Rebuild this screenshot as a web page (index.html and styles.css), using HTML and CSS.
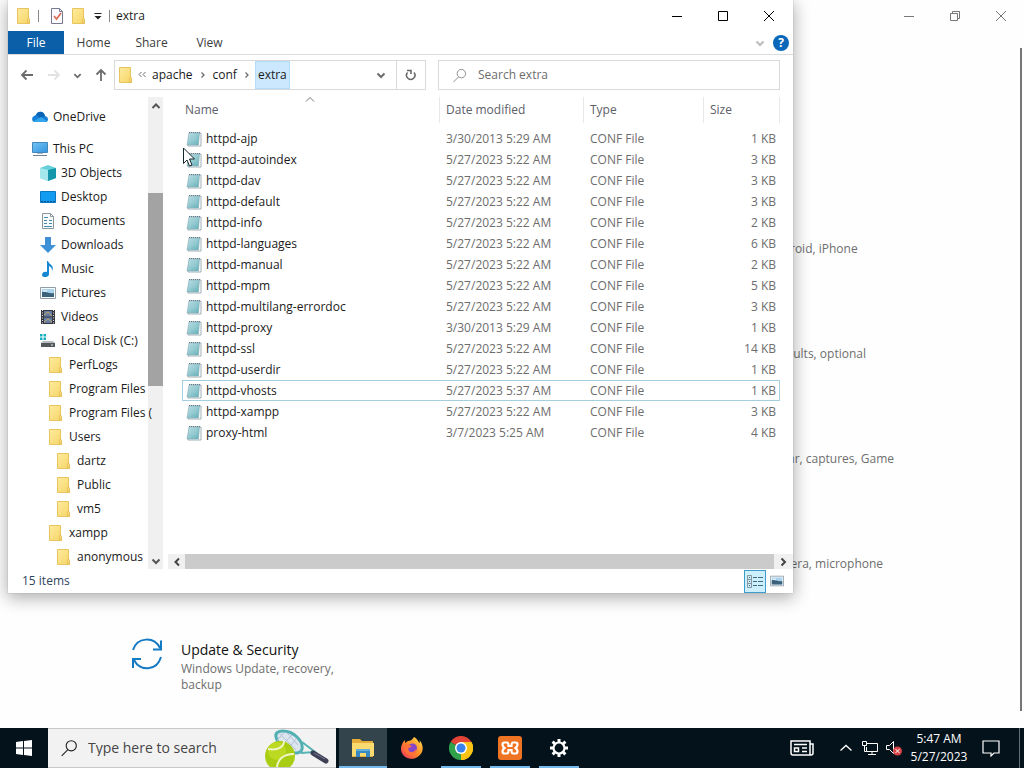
FILE: index.html
```html
<!DOCTYPE html>
<html lang="en">
<head>
<meta charset="utf-8">
<title>extra</title>
<link rel="stylesheet" href="styles.css">
</head>
<body>
<svg class="defs" aria-hidden="true">
  <defs>
    <linearGradient id="fold" x2="1" y2="1"><stop offset="0" stop-color="#ffeb9e"/><stop offset="1" stop-color="#f6d567"/></linearGradient>
    <linearGradient id="note" x2="1" y2="1"><stop offset="0" stop-color="#c3e1e8"/><stop offset="1" stop-color="#62b1b7"/></linearGradient>
    <linearGradient id="blue" x2="1" y2="1"><stop offset="0" stop-color="#72c3f5"/><stop offset="1" stop-color="#3494de"/></linearGradient>
    <linearGradient id="fox" x1="1" x2="0" y2="1"><stop offset="0" stop-color="#ffe34c"/><stop offset=".5" stop-color="#ff8a27"/><stop offset="1" stop-color="#f52c63"/></linearGradient>
    <symbol id="i-folder" viewBox="0 0 16 16"><path d="M1.500.5h11v11l1 .5v3.500h-12z" fill="url(#fold)" stroke="#e8c45f"/><path d="M11.500 15V11.500l1-2 1 2V15z" fill="#f7d978" stroke="#dfb84f" stroke-width=".7"/></symbol>
    <symbol id="i-note" viewBox="0 0 16 16"><path d="M4 2h11v13H2z" fill="#fff" stroke="#8b9da3" stroke-width=".8"/><path d="M3 2h10.500l-1 12H1z" fill="url(#note)" stroke="#86adb9" stroke-width=".6"/><path d="M3 1.500h11" stroke="#5f7a84" stroke-dasharray="1 1"/><path d="M4 5h7M4 7h7M3.500 9h7" stroke="#a3d1d8" stroke-width=".6"/></symbol>
    <symbol id="i-down" viewBox="0 0 10 10"><path d="M1.500 3.500 5 7l3.500-3.500" fill="none" stroke="currentColor" stroke-width="2"/></symbol>
    <symbol id="i-up" viewBox="0 0 10 10"><path d="M1.500 7 5 3.500 8.500 7" fill="none" stroke="currentColor" stroke-width="2"/></symbol>
    <symbol id="i-right" viewBox="0 0 10 10"><path d="M3.500 1.500 7 5 3.500 8.500" fill="none" stroke="currentColor" stroke-width="2"/></symbol>
    <symbol id="i-left" viewBox="0 0 10 10"><path d="M7 1.500 3.500 5 7 8.500" fill="none" stroke="currentColor" stroke-width="2"/></symbol>
    <symbol id="i-crumb" viewBox="0 0 10 10"><path d="M3.500 2.500 6 5 3.500 7.500" fill="none" stroke="currentColor" stroke-width="1.300"/></symbol>
    <symbol id="i-close" viewBox="0 0 12 12"><path d="m1 1 10 10M11 1 1 11" fill="none" stroke="currentColor"/></symbol>
    <symbol id="i-min" viewBox="0 0 12 12"><path d="M1 6.500h10" stroke="currentColor"/></symbol>
    <symbol id="i-search" viewBox="0 0 16 16"><circle cx="10" cy="6" r="4.500" fill="none" stroke="currentColor"/><path d="M7 9.500 1.500 15" stroke="currentColor"/></symbol>
    <symbol id="i-picture" viewBox="0 0 16 16"><path d="M.5 2.500h15v11H.5z" fill="#f8fbfd" stroke="#929da8"/><path d="M2 4h12v8H2z" fill="#a9d3ed"/><path d="M2 7c4-1 7 2 12 1v4H2z" fill="#3b617b"/><path d="M3 6h4" stroke="#fff"/></symbol>
  </defs>
</svg>

<div class="desktop">
  <main class="settings">
    <header class="settings-bar">
      <button class="caption" aria-label="Minimize Settings"><svg class="s12"><use href="#i-min"/></svg></button>
      <button class="caption" aria-label="Restore Settings"><svg class="s12" viewBox="0 0 12 12" fill="none" stroke="currentColor"><path d="M1.500 3.500h7v7h-7zM3.500 3.500v-2h7v7h-2"/></svg></button>
      <button class="caption" aria-label="Close Settings"><svg class="s12"><use href="#i-close"/></svg></button>
    </header>
    <div class="settings-body">
      <div class="categories">
        <a href="#" class="category third"><span class="category-text">Link your Android, iPhone</span></a>
        <a href="#" class="category third"><span class="category-text">Uninstall, defaults, optional</span></a>
        <a href="#" class="category third"><span class="category-text">Xbox Game Bar, captures, Game</span></a>
        <a href="#" class="category third"><span class="category-text">Location, camera, microphone</span></a>
        <a href="#" class="category">
          <svg class="category-icon" viewBox="0 0 32 32" fill="none" stroke="#147ac4" stroke-width="2"><path d="M2 12C6-1 23-2 29 10M30 2.500v9h-8M30 19C26 33 9 34 3 22M2 30v-9h8"/></svg>
          <span class="category-text"><span class="category-title">Update &amp; Security</span>Windows Update, recovery, backup</span>
        </a>
      </div>
      <div class="settings-scroll"></div>
    </div>
  </main>

  <section class="explorer" aria-label="extra">
    <header class="titlebar">
      <svg class="s16"><use href="#i-folder"/></svg>
      <span class="divider"></span>
      <button aria-label="Properties"><svg class="s16" viewBox="0 0 16 16"><path d="M2.500.5h8l3 3v12h-11z" fill="#fbfbff" stroke="#777a91"/><path d="M10.500.5v3h3" fill="none" stroke="#777a91"/><path d="m5 8 2.500 3L12 5" fill="none" stroke="#dc7058" stroke-width="1.800"/></svg></button>
      <button aria-label="New folder"><svg class="s16"><use href="#i-folder"/></svg></button>
      <button aria-label="Customize toolbar"><svg class="s10" viewBox="0 0 10 10"><path d="M1.500 2.500h7" stroke="#222"/><path d="M1.500 5h7L5 8.500z" fill="#222"/></svg></button>
      <span class="divider last"></span>
      <h1>extra</h1>
      <div class="captions">
        <button class="caption" aria-label="Minimize"><svg class="s12"><use href="#i-min"/></svg></button>
        <button class="caption" aria-label="Maximize"><svg class="s12" viewBox="0 0 12 12" fill="none" stroke="currentColor"><path d="M1.500 1.500h9v9h-9z"/></svg></button>
        <button class="caption" aria-label="Close"><svg class="s12"><use href="#i-close"/></svg></button>
      </div>
    </header>
    <nav class="ribbon">
      <button class="tab file">File</button><button class="tab">Home</button><button class="tab">Share</button><button class="tab">View</button>
      <div class="ribbon-end">
        <button class="pale" aria-label="Expand ribbon"><svg class="s10"><use href="#i-down"/></svg></button>
        <button class="help" aria-label="Help">?</button>
      </div>
    </nav>
    <div class="navbar">
      <div class="arrows">
        <button aria-label="Back"><svg class="s16" viewBox="0 0 16 16" fill="none" stroke="#6c6c6c" stroke-width="1.800"><path d="M14 8H3M7.500 3.500 3 8l4.500 4.500"/></svg></button>
        <button aria-label="Forward"><svg class="s16" viewBox="0 0 16 16" fill="none" stroke="#e2e2e2" stroke-width="1.800"><path d="M2 8h11M8.500 3.500 13 8l-4.500 4.500"/></svg></button>
        <button aria-label="Recent locations" class="recent"><svg class="s10"><use href="#i-down"/></svg></button>
        <button aria-label="Up"><svg class="s16" viewBox="0 0 16 16" fill="none" stroke="#6c6c6c" stroke-width="1.800"><path d="M8 14V3M3.500 7.500 8 3l4.500 4.500"/></svg></button>
      </div>
      <div class="address">
        <svg class="s16"><use href="#i-folder"/></svg>
        <svg class="s10 chev" viewBox="0 0 10 10" fill="none" stroke="currentColor"><path d="M4.500 2 2 4.500 4.500 7M8.500 2 6 4.500 8.500 7"/></svg>
        <button class="crumb">apache</button><svg class="s10 chev"><use href="#i-crumb"/></svg>
        <button class="crumb">conf</button><svg class="s10 chev"><use href="#i-crumb"/></svg>
        <button class="crumb current">extra</button>
        <button class="drop" aria-label="Previous locations"><svg class="s10"><use href="#i-down"/></svg></button>
        <button class="refresh" aria-label="Refresh"><svg class="s12" viewBox="0 0 12 12" fill="none" stroke="#666" stroke-width="1.500"><path d="M2.500 3.500A4.200 4.200 0 1 0 9 3.500M2 1.500h4V5"/></svg></button>
      </div>
      <label class="find"><svg class="s16"><use href="#i-search"/></svg><input type="text" placeholder="Search extra" aria-label="Search extra"></label>
    </div>

    <div class="panes">
      <ul class="tree">
        <li class="gap"><svg class="s16" viewBox="0 0 16 16"><path d="M4 6C6 1 12 2 13 7c4 1 4 6 0 6H3c-4 0-4-6 1-7z" fill="#1680d8"/><path d="M4 6C6 1 12 2 13 7l-5 2z" fill="#0964b5"/><path d="M2 12 9 8l6 4-2 1H3z" fill="#34a6eb"/></svg>OneDrive</li>
        <li><svg class="s16" viewBox="0 0 16 16"><path d="M.5 1.500h15v10H.5z" fill="url(#blue)" stroke="#4388b9"/><path d="M1 14.500h14" stroke="#72818d"/><path d="M5 12.500h6" stroke="#a9b6c0"/></svg>This PC</li>
        <li class="l2"><svg class="s16" viewBox="0 0 16 16"><path d="m8 0 8 3v10l-8 3-8-3V3z" fill="#66cfda"/><path d="m0 3 8 2v11l-8-3z" fill="#a4e7ec"/><path d="m8 5 8-2v10l-8 3z" fill="#1596aa"/></svg>3D Objects</li>
        <li class="l2"><svg class="s16" viewBox="0 0 16 16"><path d="M.5 2.500h15v11H.5z" fill="#139bf2" stroke="#0878c2"/><path d="M1 12.500h14" stroke="#07548d" stroke-dasharray="2 1"/></svg>Desktop</li>
        <li class="l2"><svg class="s16" viewBox="0 0 16 16"><path d="M2.500.5h8l3 3v12h-11z" fill="#f8fbfc" stroke="#8b969c"/><path d="M4 4.500h4M4 7.500h3m2 0h3M4 10.500h3m2 0h3M4 13.500h8" stroke="#4589ac"/><path d="M10.500.5v3h3" fill="none" stroke="#8b969c"/></svg>Documents</li>
        <li class="l2"><svg class="s16" viewBox="0 0 16 16"><path d="M5 0h6v8h5l-8 8-8-8h5z" fill="#3d91d4"/></svg>Downloads</li>
        <li class="l2"><svg class="s16" viewBox="0 0 16 16"><path d="M8 0c1 4 7 4 4 10 0-3-1-4-3-5v8c0 4-7 4-7 1 0-3 3-4 5-3V0z" fill="#1687d4"/></svg>Music</li>
        <li class="l2"><svg class="s16"><use href="#i-picture"/></svg>Pictures</li>
        <li class="l2"><svg class="s16" viewBox="0 0 16 16"><path d="M1 1h14v14H1z" fill="#34373d"/><path d="M4 2h8v5.500H4zM4 8.500h8V14H4z" fill="#667ca5"/><path d="m4 6 4-3 4 4M4 13l4-3 4 3" stroke="#c3a763" fill="none"/><path d="M2.500 1v14M13.500 1v14" stroke="#ddd" stroke-dasharray="1 1.500"/></svg>Videos</li>
        <li class="l2"><svg class="s16" viewBox="0 0 16 16"><path d="M0 1h2.500v2.500H0zM3.500 1H6v2.500H3.500zM0 4.500h2.500V7H0zM3.500 4.500H6V7H3.500z" fill="#16aebf"/><path d="M3 8h10l2 2H1z" fill="#b8bdbf"/><path d="M1 10h14v4H1z" fill="#54595d"/><path d="M11 12h2" stroke="#d8eee7"/></svg>Local Disk (C:)</li>
        <li class="l3"><svg class="s16"><use href="#i-folder"/></svg>PerfLogs</li>
        <li class="l3"><svg class="s16"><use href="#i-folder"/></svg>Program Files</li>
        <li class="l3"><svg class="s16"><use href="#i-folder"/></svg>Program Files (</li>
        <li class="l3"><svg class="s16"><use href="#i-folder"/></svg>Users</li>
        <li class="l4"><svg class="s16"><use href="#i-folder"/></svg>dartz</li>
        <li class="l4"><svg class="s16"><use href="#i-folder"/></svg>Public</li>
        <li class="l4"><svg class="s16"><use href="#i-folder"/></svg>vm5</li>
        <li class="l3"><svg class="s16"><use href="#i-folder"/></svg>xampp</li>
        <li class="l4"><svg class="s16"><use href="#i-folder"/></svg>anonymous</li>
      </ul>
      <div class="vscroll">
        <button aria-label="Scroll up"><svg class="s10"><use href="#i-up"/></svg></button>
        <div class="vtrack"><div class="vthumb"></div></div>
        <button aria-label="Scroll down"><svg class="s10"><use href="#i-down"/></svg></button>
      </div>
      <div class="files">
        <table>
          <colgroup><col><col class="c-date"><col class="c-type"><col class="c-size"></colgroup>
          <thead><tr><th>Name<svg class="s10 sort" viewBox="0 0 10 10" fill="none" stroke="#777"><path d="m1 6.500 4-4 4 4"/></svg></th><th>Date modified</th><th>Type</th><th>Size</th></tr></thead>
          <tbody>
            <tr><td><svg class="s16"><use href="#i-note"/></svg>httpd-ajp</td><td>3/30/2013 5:29 AM</td><td>CONF File</td><td>1 KB</td></tr>
            <tr><td><svg class="s16"><use href="#i-note"/></svg>httpd-autoindex</td><td>5/27/2023 5:22 AM</td><td>CONF File</td><td>3 KB</td></tr>
            <tr><td><svg class="s16"><use href="#i-note"/></svg>httpd-dav</td><td>5/27/2023 5:22 AM</td><td>CONF File</td><td>3 KB</td></tr>
            <tr><td><svg class="s16"><use href="#i-note"/></svg>httpd-default</td><td>5/27/2023 5:22 AM</td><td>CONF File</td><td>3 KB</td></tr>
            <tr><td><svg class="s16"><use href="#i-note"/></svg>httpd-info</td><td>5/27/2023 5:22 AM</td><td>CONF File</td><td>2 KB</td></tr>
            <tr><td><svg class="s16"><use href="#i-note"/></svg>httpd-languages</td><td>5/27/2023 5:22 AM</td><td>CONF File</td><td>6 KB</td></tr>
            <tr><td><svg class="s16"><use href="#i-note"/></svg>httpd-manual</td><td>5/27/2023 5:22 AM</td><td>CONF File</td><td>2 KB</td></tr>
            <tr><td><svg class="s16"><use href="#i-note"/></svg>httpd-mpm</td><td>5/27/2023 5:22 AM</td><td>CONF File</td><td>5 KB</td></tr>
            <tr><td><svg class="s16"><use href="#i-note"/></svg>httpd-multilang-errordoc</td><td>5/27/2023 5:22 AM</td><td>CONF File</td><td>3 KB</td></tr>
            <tr><td><svg class="s16"><use href="#i-note"/></svg>httpd-proxy</td><td>3/30/2013 5:29 AM</td><td>CONF File</td><td>1 KB</td></tr>
            <tr><td><svg class="s16"><use href="#i-note"/></svg>httpd-ssl</td><td>5/27/2023 5:22 AM</td><td>CONF File</td><td>14 KB</td></tr>
            <tr><td><svg class="s16"><use href="#i-note"/></svg>httpd-userdir</td><td>5/27/2023 5:22 AM</td><td>CONF File</td><td>1 KB</td></tr>
            <tr class="focused"><td><svg class="s16"><use href="#i-note"/></svg>httpd-vhosts</td><td>5/27/2023 5:37 AM</td><td>CONF File</td><td>1 KB</td></tr>
            <tr><td><svg class="s16"><use href="#i-note"/></svg>httpd-xampp</td><td>5/27/2023 5:22 AM</td><td>CONF File</td><td>3 KB</td></tr>
            <tr><td><svg class="s16"><use href="#i-note"/></svg>proxy-html</td><td>3/7/2023 5:25 AM</td><td>CONF File</td><td>4 KB</td></tr>
          </tbody>
        </table>
        <div class="hscroll">
          <button aria-label="Scroll left"><svg class="s10"><use href="#i-left"/></svg></button>
          <div class="hthumb"></div>
          <button aria-label="Scroll right"><svg class="s10"><use href="#i-right"/></svg></button>
        </div>
      </div>
    </div>
    <footer class="status">
      <span>15 items</span>
      <div class="views">
        <button class="view on" aria-label="Details view"><svg class="s16" viewBox="0 0 16 16" fill="none"><path d="M.5 2.500h4v12h-4zM.5 6.500h4M.5 10.500h4" stroke="#8795a0"/><path d="M2 4.500h1M2 8.500h1M2 12.500h1M6 4.500h4m1 0h5M6 8.500h4m1 0h5M6 12.500h4m1 0h5" stroke="#3c6c82"/></svg></button>
        <button class="view" aria-label="Large icons view"><svg class="s14"><use href="#i-picture"/></svg></button>
      </div>
    </footer>
  </section>

  <svg class="pointer" viewBox="0 0 12 20"><path d="M.5 1v15.500l3.500-3.500 2.500 6 2.500-1-2.500-6h5z" fill="#fff" stroke="#16252d"/></svg>
</div>

<footer class="taskbar">
  <button class="start" aria-label="Start"><svg class="s16" viewBox="0 0 16 16" fill="#fff"><path d="m0 2 7-1v6.500H0zM8 1l8-1v7.500H8zM0 8.500h7V15l-7-1zM8 8.500h8V16l-8-1z"/></svg></button>
  <label class="search">
    <svg class="s18"><use href="#i-search"/></svg>
    <input type="text" placeholder="Type here to search" aria-label="Type here to search">
    <svg class="tennis" viewBox="0 0 66 40">
      <path d="M12 9C10 1 25 1 33 9c7 7 7 15 0 16-9 1-19-7-21-16z" fill="#dce5ee" stroke="#53b0b2" stroke-width="3"/>
      <path d="m16 6 16 16M23 5l11 12M13 12l12 11M13 12l7-7M17 18 28 7M23 22l9-11" stroke="#aab7cf" stroke-width=".8"/>
      <path d="m38 14 13 10-14 1" fill="none" stroke="#58b3b5" stroke-width="2"/>
      <path d="m49 25 13 8" stroke="#3d4054" stroke-width="5" stroke-linecap="round"/><path d="m50 25 11 6" stroke="#7a7894"/>
      <circle cx="16" cy="28" r="15" fill="#a9cd13"/><circle cx="13" cy="23" r="9" fill="#c5df29" opacity=".7"/>
      <path d="M4 21c11 2 16-3 16-8M13 43c-1-12 7-17 17-17" fill="none" stroke="#f0f4c7" stroke-width="2"/>
    </svg>
  </label>
  <div class="apps">
    <button class="app active running" aria-label="File Explorer"><svg class="s24" viewBox="0 0 24 24"><path d="M1 3h8l2 2h11v16H1z" fill="#e6ae38"/><path d="M1 7h22v13H1z" fill="#fbda70"/><path d="M5 13h14v8h-4v-4H9v4H5z" fill="#3689c5"/><path d="M5 13h14v2H5z" fill="#62afd8"/></svg></button>
    <button class="app" aria-label="Firefox"><svg class="s24" viewBox="0 0 24 24"><path d="M14 1c4 2 4 5 6 6l-.5-3c5 6 4 14-2 17-6 4-14 1-16-5C0 11 2 7 5 4v3l3-2c2 0 4-1 6-4z" fill="url(#fox)"/><circle cx="12.500" cy="12" r="4.500" fill="#8645c8"/><path d="M4 9c4-2 5 0 8 1-1 2-4 1-4 4 2 4 7 2 8-1 2 6-6 8-10 4-2-2-3-5-2-8z" fill="#ff7139"/></svg></button>
    <button class="app running" aria-label="Chrome"><svg class="s24" viewBox="0 0 24 24"><path d="M12 12 1.600 6A12 12 0 0 1 22.400 6z" fill="#e44435"/><path d="M12 12h-.1L22.400 6A12 12 0 0 1 12 24z" fill="#fbc316"/><path d="M12 12v12A12 12 0 0 1 1.600 6z" fill="#31a14b"/><path d="M12 6h10.400A12 12 0 0 1 12 24l5-9z" fill="#fbc316"/><circle cx="12" cy="12" r="6" fill="#fff"/><circle cx="12" cy="12" r="4.500" fill="#3982ec"/></svg></button>
    <button class="app running" aria-label="XAMPP"><svg class="s24" viewBox="0 0 24 24"><rect width="24" height="24" rx="3" fill="#ee7423"/><path d="M6.500 6.500H9q1.500 0 1.500 3.500h3q0-3.500 1.500-3.500h2.500q2 0 2 2t-2 3.500q2 1.500 2 3.500t-2 2H15q-1.500 0-1.500-3.500h-3q0 3.500-1.500 3.500H6.500q-2 0-2-2t2-3.500q-2-1.500-2-3.500t2-2z" fill="none" stroke="#fff" stroke-width="2.200"/></svg></button>
    <button class="app running" aria-label="Settings"><svg class="s20" viewBox="0 0 20 20" fill="none" stroke="#fff"><circle cx="10" cy="10" r="5.500" stroke-width="2.200"/><path d="M10 1v3M10 16v3M1 10h3M16 10h3M3.600 3.600l2.200 2.200M14.200 14.200l2.200 2.200M3.600 16.400l2.200-2.200M14.200 5.800l2.200-2.200" stroke-width="3"/></svg></button>
  </div>
  <div class="tray">
    <button class="news" aria-label="News"><svg class="s24" viewBox="0 0 24 24" fill="none" stroke="#fff" stroke-width="1.500"><path d="M1 5h19v14H3q-2 0-2-2zM20 8h3v9q0 2-2 2h-2M4 8.500h13M12 12h5M12 15.500h5M4.500 12h4v3.500h-4z"/></svg></button>
    <button aria-label="Show hidden icons"><svg class="s14" viewBox="0 0 14 14" fill="none" stroke="#fff" stroke-width="1.300"><path d="m1.500 9.500 5.500-5 5.500 5"/></svg></button>
    <button aria-label="Network"><svg class="s16" viewBox="0 0 16 16" fill="none" stroke="#fff"><path d="M5 3.500h10.500v8h-11V7M.5 1.500h4v4h-4zM2.500 5.500v6h2M10 12v2.500M6 14.500h8"/></svg></button>
    <button aria-label="Volume"><svg class="s16" viewBox="0 0 16 16"><path d="M.5 5.500h3l4-4v12l-4-4h-3z" fill="none" stroke="#fff"/><circle cx="11.500" cy="11" r="4.500" fill="#d54346"/><path d="m9.500 9 4 4m0-4-4 4" stroke="#fff"/></svg></button>
    <button class="clock">5:47 AM<br>5/27/2023</button>
    <button class="notify" aria-label="Notifications"><svg class="s18" viewBox="0 0 18 18" fill="none" stroke="#fff" stroke-width="1.200"><path d="M1 2h16v12h-5l-3 3v-3H1z"/></svg></button>
    <button class="peek" aria-label="Show desktop"></button>
  </div>
</footer>
</body>
</html>
```
FILE: styles.css
```css
* { box-sizing: border-box; }
body {
  margin: 0;
  height: 100vh;
  display: flex;
  flex-direction: column;
  overflow: hidden;
  background: #fff;
  color: #1a1a1a;
  font: 12px/16px "Open Sans", "Noto Sans", sans-serif;
}
button {
  display: flex;
  align-items: center;
  justify-content: center;
  padding: 0;
  border: 0;
  background: none;
  color: inherit;
  font: inherit;
}
input { min-width: 0; padding: 0; border: 0; outline: 0; background: none; font: inherit; }
a { color: inherit; text-decoration: none; }
svg { display: block; flex: none; }
.defs { position: absolute; width: 0; height: 0; }
.s10 { width: 10px; height: 10px; }
.s12 { width: 12px; height: 12px; }
.s14 { width: 14px; height: 14px; }
.s16 { width: 16px; height: 16px; }
.s18 { width: 18px; height: 18px; }
.s20 { width: 20px; height: 20px; }
.s24 { width: 24px; height: 24px; }

.desktop { position: relative; flex: 1; min-height: 0; }

/* Settings window */
.settings { height: 100%; display: flex; flex-direction: column; background: #fefefe; }
.settings-bar { display: flex; justify-content: flex-end; color: #777; }
.caption { width: 46px; height: 32px; }
.settings-body { flex: 1; min-height: 0; display: flex; justify-content: space-between; padding: 16px 2px 17px 131px; }
.settings-scroll { width: 2px; background: #767676; }
.categories {
  display: grid;
  grid-template-columns: repeat(3, 266px);
  grid-auto-rows: 105px;
  padding-top: 170px;
  overflow: hidden;
}
.category { display: flex; gap: 18px; }
.category.third { grid-column: 3; padding: 23px 0 0 50px; }
.category-icon { width: 32px; height: 32px; }
.category-text { width: 200px; color: #6e6e6e; }
.category-icon + .category-text { width: 160px; }
.category-title { display: block; color: #111; font-size: 14px; line-height: 23px; }

/* Explorer window */
.explorer {
  position: absolute;
  top: 0;
  left: 8px;
  right: 231px;
  background: #fff;
  box-shadow: 0 0 1px #999, 0 4px 16px 1px rgba(0, 0, 0, .32);
}
.titlebar { display: flex; align-items: center; gap: 6px; height: 31px; padding-left: 8px; }
.titlebar h1 { margin: 0; font-size: 12px; font-weight: 400; }
.divider { width: 1px; height: 12px; margin-right: 4px; background: #888; }
.divider.last { margin-right: 0; }
.captions { display: flex; margin: 0 1px 0 auto; color: #000; }
.ribbon { display: flex; height: 24px; border-bottom: 1px solid #dcdcdc; color: #3c3c3c; }
.tab { width: 57px; margin-right: 1px; }
.tab.file { width: 56px; background: #0a5fa8; color: #fff; }
.ribbon-end { display: flex; align-items: center; gap: 8px; margin-left: auto; padding-right: 4px; }
.pale { color: #bcbcbc; }
.help { width: 16px; height: 16px; border-radius: 50%; background: #0867b8; color: #fff; font-weight: 700; }
.navbar { display: flex; align-items: center; height: 40px; padding-right: 13px; }
.arrows { display: flex; align-items: center; justify-content: space-between; width: 106px; padding: 0 5px 0 11px; }
.recent, .chev, .drop { color: #6c6c6c; }
.arrows .s10 { width: 9px; height: 9px; }
.address {
  flex: 312 1 312px;
  display: flex;
  align-items: center;
  height: 30px;
  padding-left: 3px;
  border: 1px solid #d9d9d9;
}
.address > .chev { margin: 0 3px; }
.crumb { padding: 0 2px; height: 28px; }
.crumb.current { padding: 0 3px; background: #cce8ff; box-shadow: inset 0 0 0 1px #b2dcfb; }
.drop { margin-left: auto; width: 30px; height: 28px; }
.refresh { width: 29px; height: 28px; border-left: 1px solid #d9d9d9; }
.find {
  flex: 342 1 342px;
  display: flex;
  align-items: center;
  gap: 11px;
  height: 30px;
  margin-left: 12px;
  padding-left: 13px;
  border: 1px solid #d9d9d9;
  color: #888;
}
.find .s16 { width: 15px; height: 15px; }
.find input { flex: 1; }
.find input::placeholder { color: #6d6d6d; opacity: 1; }

.panes { display: flex; padding-top: 2px; }
.tree { position: relative; z-index: 1; width: 140px; margin: 0; padding: 8px 0 0; list-style: none; }
.tree li { display: flex; align-items: center; gap: 5px; height: 24px; padding-left: 24px; white-space: nowrap; }
.tree .gap { margin-bottom: 8px; }
.tree .l2 { padding-left: 32px; }
.tree .l3 { padding-left: 40px; }
.tree .l4 { padding-left: 48px; }
.vscroll { display: flex; flex-direction: column; width: 15px; background: #f0f0f0; color: #555; }
.vscroll button { height: 17px; }
.vtrack { flex: 1; display: grid; grid-template-rows: 18% 44% 1fr; }
.vthumb { grid-row: 2; background: #a3a3a3; }

.files { flex: 1; display: flex; flex-direction: column; justify-content: space-between; padding-left: 5px; }
table { margin: 0 13px 0 14px; table-layout: fixed; border-collapse: separate; border-spacing: 0; }
.c-date { width: 144px; }
.c-type { width: 120px; }
.c-size { width: 76px; }
th {
  position: relative;
  height: 26px;
  padding: 0 6px;
  border-right: 1px solid #e8e8e8;
  color: #5c6068;
  font-weight: 400;
  text-align: left;
}
th:first-child { padding-left: 3px; }
.sort { position: absolute; top: -2px; left: 50%; margin-left: -6px; }
thead::after { content: ""; display: block; height: 5px; }
td { height: 21px; padding: 0 6px; color: #6d6d6d; white-space: nowrap; }
td:first-child { display: flex; align-items: center; gap: 4px; padding-left: 4px; color: #1a1a1a; }
td:last-child { padding-right: 4px; text-align: right; }
.focused td { border: 1px solid #a4cfe0; border-width: 1px 0; }
.focused td:first-child { border-left-width: 1px; padding-left: 3px; }
.focused td:last-child { border-right-width: 1px; padding-right: 3px; }
.hscroll { display: flex; height: 15px; padding-right: 2px; background: #f0f0f0; color: #444; }
.hscroll button { width: 17px; }
.hthumb { flex: 1; background: #cbcbcb; }
.status { display: flex; align-items: center; justify-content: space-between; height: 24px; padding: 0 5px 0 14px; color: #2f4560; }
.views { display: flex; }
.view { width: 22px; height: 23px; }
.view.on { background: #cdeefb; border: 1px solid #3c9ccc; }
.pointer { position: absolute; top: 147px; left: 183px; width: 12px; height: 20px; }

/* Taskbar */
.taskbar { display: flex; height: 40px; background: #04121b; color: #fff; }
.start { width: 48px; }
.search {
  display: flex;
  align-items: center;
  gap: 10px;
  width: 288px;
  padding-left: 12px;
  border: 1px solid #c8c8c8;
  border-width: 1px 0;
  background: #f2f2f2;
  color: #222;
  overflow: hidden;
}
.search input { flex: 1; font-size: 14px; }
.search input::placeholder { color: #454545; opacity: 1; }
.tennis { width: 66px; height: 40px; margin-right: 6px; }
.apps { display: flex; gap: 1px; margin-left: 3px; }
.app { display: grid; place-items: center; width: 48px; background: linear-gradient(#76b9ed, #76b9ed) bottom / 0 2px no-repeat; }
.app.running { background-size: 40px 2px; }
.app.active { background-color: #33444c; background-size: 48px 2px; }
.tray { display: flex; align-items: stretch; margin-left: auto; }
.tray button { width: 24px; }
.tray .news { width: 64px; }
.tray .clock { width: 66px; line-height: 18px; }
.tray .notify { width: 38px; }
.tray .peek { width: 5px; margin-left: 9px; border-left: 1px solid #60707a; }
```
